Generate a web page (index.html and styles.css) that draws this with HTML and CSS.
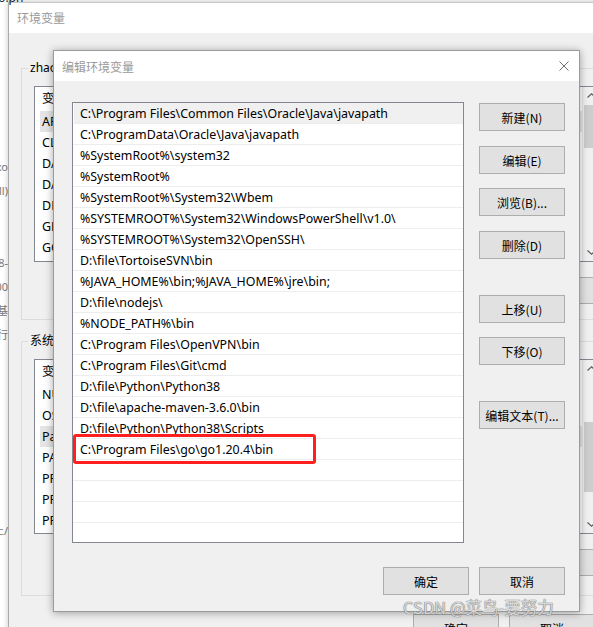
FILE: index.html
```html
<!DOCTYPE html>
<html lang="zh-CN">
<head>
<meta charset="utf-8">
<title>编辑环境变量</title>
<link rel="stylesheet" href="styles.css">
</head>
<body>
<div class="desk">
  <div class="strip">
    <div class="frag">Inboxo</div>
    <div class="frag">(all)</div>
    <div class="frag"></div>
    <div class="frag"></div>
    <div class="frag">2023-08-</div>
    <div class="frag">1200</div>
    <div class="frag">文件夹基</div>
    <div class="frag">执行</div>
    <div class="frag f-last">静止/</div>
  </div>
  <div class="bgwin">
    <div class="bg-title">环境变量</div>
    <div class="bg-body">
      <fieldset class="grp g1">
        <legend>zhao 的用户变量(U)</legend>
        <div class="lv lv1">
          <div class="lv-rows">
            <div class="lv-head">变量</div>
            <div class="lv-row sel">APPDATA_HOME</div>
            <div class="lv-row">CLASSPATH</div>
            <div class="lv-row">DATA_DIR</div>
            <div class="lv-row">DART_HOME</div>
            <div class="lv-row">DEV_HOME</div>
            <div class="lv-row">GRADLE_HOME</div>
            <div class="lv-row">GOPATH</div>
          </div>
          <div class="sb">
            <span class="arr"><svg width="9" height="5" viewBox="0 0 9 5"><path d="M0.5 4.5 L4.5 0.8 L8.5 4.5" fill="none" stroke="#606060" stroke-width="1.2"/></svg></span>
            <span class="thumb t1"></span>
            <span class="sb-fill"></span>
            <span class="arr"><svg width="9" height="5" viewBox="0 0 9 5"><path d="M0.5 0.5 L4.5 4.2 L8.5 0.5" fill="none" stroke="#606060" stroke-width="1.2"/></svg></span>
          </div>
        </div>
        <div class="grp-btns">
          <button class="btn">新建(N)...</button>
          <button class="btn">编辑(E)...</button>
          <button class="btn">删除(D)</button>
        </div>
      </fieldset>
      <fieldset class="grp g2">
        <legend>系统变量(S)</legend>
        <div class="lv lv2">
          <div class="lv-rows">
            <div class="lv-head">变量</div>
            <div class="lv-row">NUMBER_OF_PROCESSORS</div>
            <div class="lv-row">OS</div>
            <div class="lv-row sel">Path</div>
            <div class="lv-row">PATHEXT</div>
            <div class="lv-row">PROCESSOR_ARCHITECTURE</div>
            <div class="lv-row">PROCESSOR_IDENTIFIER</div>
            <div class="lv-row">PROCESSOR_LEVEL</div>
          </div>
          <div class="sb">
            <span class="arr"><svg width="9" height="5" viewBox="0 0 9 5"><path d="M0.5 4.5 L4.5 0.8 L8.5 4.5" fill="none" stroke="#606060" stroke-width="1.2"/></svg></span>
            <span class="thumb t2"></span>
            <span class="sb-fill"></span>
            <span class="arr"><svg width="9" height="5" viewBox="0 0 9 5"><path d="M0.5 0.5 L4.5 4.2 L8.5 0.5" fill="none" stroke="#606060" stroke-width="1.2"/></svg></span>
          </div>
        </div>
        <div class="grp-btns">
          <button class="btn">新建(W)...</button>
          <button class="btn">编辑(I)...</button>
          <button class="btn">删除(L)</button>
        </div>
      </fieldset>
      <div class="bg-foot">
        <button class="btn">确定</button>
        <button class="btn">取消</button>
      </div>
    </div>
  </div>
</div>

<span class="top-frag">ɓ.pn</span>

<div class="dlg">
  <div class="dlg-title">
    <span>编辑环境变量</span>
    <svg class="close" width="10" height="10" viewBox="0 0 10 10"><path d="M0.5 0.5 L9.5 9.5 M9.5 0.5 L0.5 9.5" stroke="#6f6f6f" stroke-width="1" fill="none"/></svg>
  </div>
  <div class="dlg-body">
    <div class="list">
      <div class="row hot">C:\Program Files\Common Files\Oracle\Java\javapath</div>
      <div class="row">C:\ProgramData\Oracle\Java\javapath</div>
      <div class="row">%SystemRoot%\system32</div>
      <div class="row">%SystemRoot%</div>
      <div class="row">%SystemRoot%\System32\Wbem</div>
      <div class="row">%SYSTEMROOT%\System32\WindowsPowerShell\v1.0\</div>
      <div class="row">%SYSTEMROOT%\System32\OpenSSH\</div>
      <div class="row">D:\file\TortoiseSVN\bin</div>
      <div class="row">%JAVA_HOME%\bin;%JAVA_HOME%\jre\bin;</div>
      <div class="row">D:\file\nodejs\</div>
      <div class="row">%NODE_PATH%\bin</div>
      <div class="row">C:\Program Files\OpenVPN\bin</div>
      <div class="row">C:\Program Files\Git\cmd</div>
      <div class="row">D:\file\Python\Python38</div>
      <div class="row">D:\file\apache-maven-3.6.0\bin</div>
      <div class="row">D:\file\Python\Python38\Scripts</div>
      <div class="row">C:\Program Files\go\go1.20.4\bin</div>
      <div class="row"></div>
      <div class="row"></div>
      <div class="row"></div>
      <div class="row"></div>
      <div class="mark"></div>
    </div>
    <div class="side">
      <button class="btn">新建(N)</button>
      <button class="btn nudge">编辑(E)</button>
      <button class="btn">浏览(B)...</button>
      <button class="btn nudge">删除(D)</button>
      <button class="btn gap-big">上移(U)</button>
      <button class="btn">下移(O)</button>
      <button class="btn gap-big">编辑文本(T)...</button>
    </div>
    <div class="foot">
      <button class="btn">确定</button>
      <button class="btn">取消</button>
    </div>
  </div>
</div>

<div class="wm">CSDN @菜鸟-要努力</div>
</body>
</html>
```

FILE: styles.css
```css
* { box-sizing: border-box; }
html, body { margin: 0; padding: 0; }
body {
  width: 593px;
  height: 627px;
  overflow: hidden;
  position: relative;
  background: #f0f0f0;
  font-family: "Noto Sans", "Noto Sans CJK SC", sans-serif;
  font-size: 12px;
  color: #000;
}
.desk {
  display: flex;
  align-items: flex-start;
  height: 627px;
}
/* window fragment to the left */
.strip {
  width: 8px;
  height: 627px;
  flex-shrink: 0;
  background: #fff;
  padding-top: 155px;
  overflow: hidden;
}
.frag {
  height: 24px;
  line-height: 24px;
  display: flex;
  justify-content: flex-end;
  white-space: nowrap;
  color: #7a7a7a;
  font-size: 11px;
  overflow: hidden;
}
.f-last { margin-top: 172px; }
.top-frag {
  position: absolute;
  left: -2px;
  top: -9px;
  font-size: 12px;
  color: #222;
  line-height: 14px;
}
/* background window */
.bgwin {
  width: 612px;
  flex-shrink: 0;
  margin-top: 2px;
  border-left: 1px solid #a9a9a9;
  border-top: 1px solid #c8c8c8;
  background: #f0f0f0;
  box-shadow: -2px 0 4px rgba(0,0,0,0.12);
}
.bg-title {
  height: 30px;
  background: #fff;
  color: #9a9a9a;
  padding-left: 8px;
  display: flex;
  align-items: center;
}
.bg-body {
  padding: 0 0 0 12px;
}
.grp {
  display: block;
  margin: 0;
  min-width: 0;
  width: 592px;
  border: 1px solid #dcdcdc;
  padding: 0 6px 15px 6px;
}
.grp legend {
  padding: 0 2px;
  line-height: 16px;
  height: 16px;
  color: #000;
}
.g1 { margin-top: 27px; }
.g2 { margin-top: 13px; padding-bottom: 19px; }
.lv {
  margin: 10px 0 0 6px;
  width: 566px;
  border: 1px solid #828790;
  background: #fff;
  display: flex;
}
.lv1 { height: 176px; }
.lv2 { height: 175px; }
.lv-rows {
  flex: 1;
}
.lv-head {
  height: 24px;
  line-height: 24px;
  padding-left: 7px;
  font-size: 12.5px;
}
.lv-row {
  height: 21px;
  line-height: 21px;
  margin-left: 5px;
  padding-left: 2px;
  font-size: 12.5px;
  white-space: nowrap;
}
.lv-row.sel { background: #e5e5e5; }
.sb {
  width: 17px;
  flex-shrink: 0;
  background: #f0f0f0;
  border-left: 1px solid #e6e6e6;
  display: flex;
  flex-direction: column;
}
.arr {
  height: 17px;
  flex-shrink: 0;
  display: flex;
  align-items: center;
  justify-content: center;
}
.thumb { background: #cdcdcd; margin: 1px 1px 0 1px; flex-shrink: 0; }
.t1 { height: 43px; }
.t2 { margin-top: 45px; height: 70px; }
.sb-fill { flex: 1; }
.grp-btns {
  display: flex;
  gap: 10px;
  margin-top: 15px;
  padding-left: 550px;
}
.btn {
  width: 86px;
  height: 28px;
  flex-shrink: 0;
  padding: 0;
  background: #e1e1e1;
  border: 1px solid #adadad;
  border-radius: 0;
  font-family: "Noto Sans CJK SC", "Noto Sans", sans-serif;
  font-size: 12px;
  color: #000;
  white-space: nowrap;
}
.grp-btns .btn { height: 27px; }
.bg-foot {
  display: flex;
  justify-content: flex-end;
  gap: 10px;
  margin-top: 18px;
  padding-right: 25px;
}
/* foreground dialog */
.dlg {
  position: absolute;
  left: 53px;
  top: 50px;
  width: 527px;
  height: 562px;
  border: 1px solid #9b9b9b;
  background: #f0f0f0;
  box-shadow: 0 1px 8px rgba(0,0,0,0.35);
}
.dlg-title {
  height: 30px;
  background: #fff;
  color: #9a9a9a;
  padding: 0 10px 0 8px;
  display: flex;
  align-items: center;
  justify-content: space-between;
  font-family: "Noto Sans CJK SC", sans-serif;
}
.close { display: block; }
.dlg-body {
  display: grid;
  grid-template-columns: 392px 86px;
  column-gap: 15px;
  padding: 21px 14px 0 18px;
}
.list {
  position: relative;
  height: 441px;
  border: 1px solid #828790;
  background: #fff;
  overflow: hidden;
}
.row {
  height: 21px;
  line-height: 20px;
  padding-top: 1px;
  border-bottom: 1px solid #ededed;
  padding-left: 7px;
  white-space: nowrap;
  font-size: 12.4px;
}
.row.hot { background: #f0f0f0; margin-left: 1px; padding-left: 6px; }
.mark {
  position: absolute;
  left: 0;
  top: 331px;
  width: 243px;
  height: 30px;
  border: 3px solid #ff1f1f;
  border-radius: 3px;
}
.side {
  display: flex;
  flex-direction: column;
  gap: 14px;
  padding-top: 1px;
}
.side .nudge { margin-top: 1px; }
.side .gap-big { margin-top: 22px; }
.foot {
  grid-column: 1 / -1;
  display: flex;
  justify-content: flex-end;
  gap: 10px;
  margin-top: 24px;
}
.wm {
  position: absolute;
  left: 403px;
  top: 595px;
  font-family: "Noto Sans CJK SC", sans-serif;
  font-size: 16.5px;
  line-height: 24px;
  color: rgba(235,235,235,0.85);
  text-shadow: 0 0 1px #6a6a6a, 0 0 1px #6a6a6a;
  white-space: nowrap;
}
```
